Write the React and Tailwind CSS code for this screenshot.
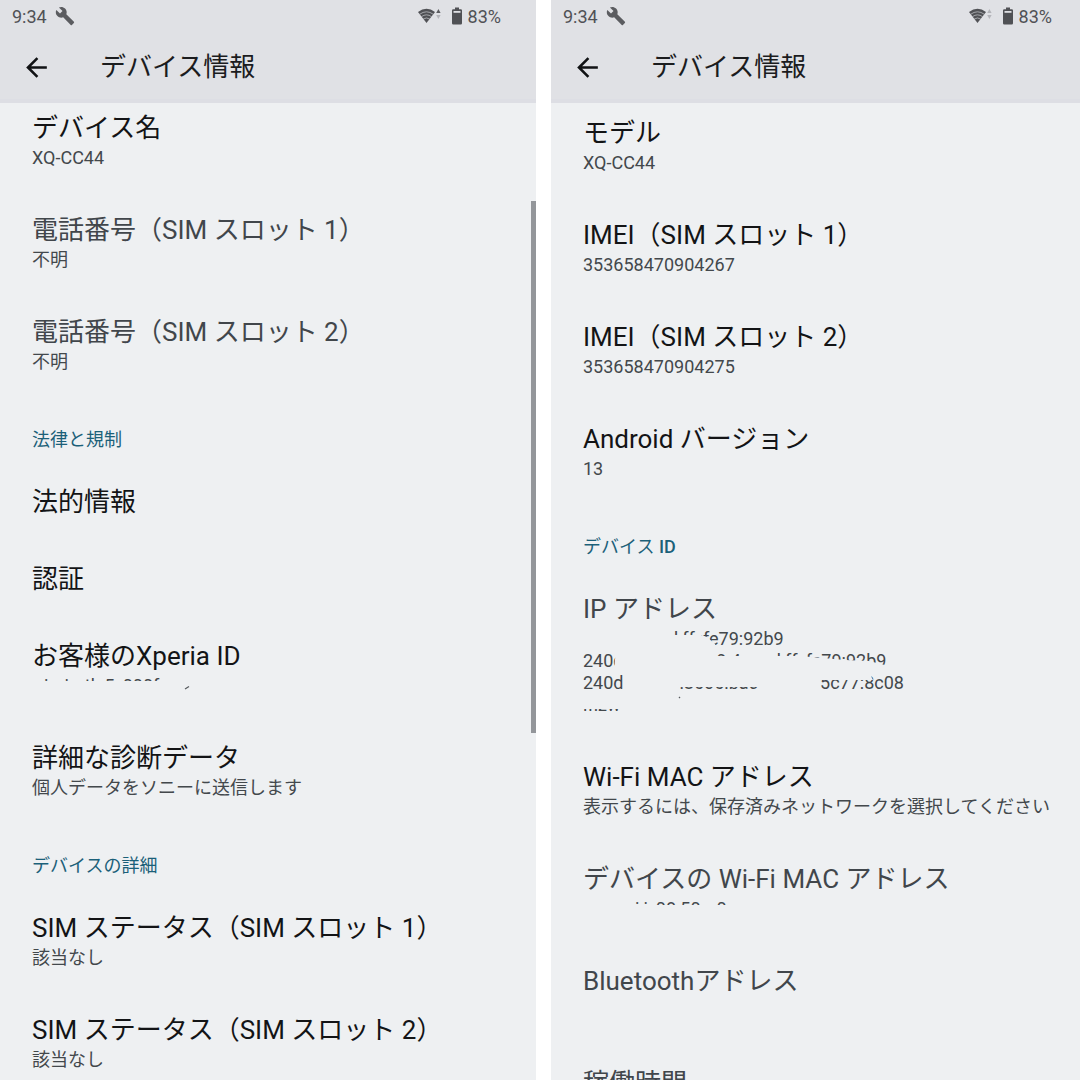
import React from 'react';
import { MdArrowBack, MdBuild } from 'react-icons/md';
import clsx from 'clsx';

const WifiIcon = ({ active }) => (
  <svg className="w-6 h-4" viewBox="0 0 24 16" fill="none" aria-hidden="true">
    <path d="M1 4Q9.500 -2.600 18 4L9.500 15Z" fill="#505155" />
    <path d="M2.600 6.300Q9.500 1.300 16.400 6.300" stroke="#c9cace" strokeWidth="0.700" />
    <path d="M4.400 8.700Q9.500 5 14.600 8.700" stroke="#c9cace" strokeWidth="0.700" />
    <path d="M6.200 11.100Q9.500 8.800 12.800 11.100" stroke="#c9cace" strokeWidth="0.700" />
    <path d="M19.200 5L21.400 1L23.600 5Z" fill={active ? '#5b5c60' : '#b4b5ba'} />
    <path d="M19.200 7L21.400 11L23.600 7Z" fill="#b4b5ba" />
  </svg>
);

const BatteryIcon = () => (
  <svg className="w-3 h-[18px]" viewBox="0 0 12 18" aria-hidden="true">
    <path d="M4 0.500H8V2.300H9.800Q11 2.300 11 3.500V16.300Q11 17.500 9.800 17.500H2.200Q1 17.500 1 16.300V3.500Q1 2.300 2.200 2.300H4Z" fill="#505155" />
    <path d="M2.500 4H9.500V5.800H2.500Z" fill="#dfe0e4" />
  </svg>
);

const Header = ({ active, edge }) => (
  <header className="relative z-10 h-[103px] bg-[#e0e1e5] border-b-4 border-[#dddee4]">
    <div className={clsx('flex h-8 items-center justify-between pl-3 text-[18px] text-[#505155]', edge)}>
      <div className="flex items-center gap-2">
        <span>9:34</span>
        <MdBuild className="size-5 text-[#5b5c60]" />
      </div>
      <div className="flex items-center">
        <WifiIcon active={active} />
        <div className="ml-[10px] flex items-center gap-[5px]">
          <BatteryIcon />
          <span>83%</span>
        </div>
      </div>
    </div>
    <div className="flex h-[70px] items-center pl-[21px]">
      <button type="button" aria-label="戻る" className="mr-12">
        <MdArrowBack className="size-[31px] text-[#111214]" />
      </button>
      <h1 className="text-[26px] leading-[35px] text-[#1b1c1e]">デバイス情報</h1>
    </div>
  </header>
);

const Item = ({ title, muted, children }) => (
  <li className="py-[21px] whitespace-nowrap">
    <h3 className={clsx('text-[26px] leading-[35px]', muted ? 'text-[#41464b]' : 'text-[#131416]')}>
      {title}
    </h3>
    {children && (
      <div className="mt-px mb-[2px] text-[18px] leading-[22px] text-[#43484c]">{children}</div>
    )}
  </li>
);

const Category = ({ children }) => (
  <h2 className="pt-[33px] pb-[13px] text-[18px] leading-[22px] text-[#1b6079]">{children}</h2>
);

// Values with the private part wiped out in the panel colour
const Wiped = ({ children, className, viewBox, paths, marks }) => (
  <div className="relative">
    {children}
    <svg className={clsx('absolute top-0 left-0', className)} viewBox={viewBox} aria-hidden="true">
      <path d={paths} fill="#eef0f2" />
      {marks && <path d={marks} stroke="#55595d" strokeWidth="1.200" fill="none" />}
    </svg>
  </div>
);

const Panel = ({ header, scrolled, children }) => (
  <section className="relative overflow-hidden bg-[#eef0f2]">
    {header}
    <div className={clsx('pl-8', scrolled)}>{children}</div>
  </section>
);

export default function App() {
  return (
    <main className="grid h-screen grid-cols-[536fr_529fr] gap-[15px] overflow-hidden bg-white font-[Roboto,'Noto_Sans_CJK_JP',sans-serif]" lang="ja">
      <Panel header={<Header active edge="pr-[35px]" />} scrolled="-mt-[13px]">
        <ul>
          <Item title="デバイス名">XQ-CC44</Item>
          <Item title="電話番号（SIM スロット 1）" muted>不明</Item>
          <Item title="電話番号（SIM スロット 2）" muted>不明</Item>
        </ul>
        <Category>法律と規制</Category>
        <ul>
          <Item title="法的情報" />
          <Item title="認証" />
          <Item title="お客様のXperia ID">
            <Wiped
              className="w-[200px] h-[22px]"
              viewBox="0 0 200 22"
              paths="M0 6H200V22H0Z"
              marks="M153 14L157 11.500"
            >
              <div className="flex">
                <span className="ml-3">i</span>
                <span className="ml-4">i</span>
                <span className="ml-4">th</span>
                <span className="ml-1">5</span>
                <span className="ml-2">000f</span>
              </div>
            </Wiped>
          </Item>
          <Item title="詳細な診断データ">個人データをソニーに送信します</Item>
        </ul>
        <Category>デバイスの詳細</Category>
        <ul>
          <Item title="SIM ステータス（SIM スロット 1）">該当なし</Item>
          <Item title="SIM ステータス（SIM スロット 2）">該当なし</Item>
        </ul>
        <div className="absolute right-0 top-[201px] h-[532px] w-[5px] bg-[#93969a]" />
      </Panel>

      <Panel header={<Header edge="pr-7" />} scrolled="-mt-2">
        <ul>
          <Item title="モデル">XQ-CC44</Item>
          <Item title="IMEI（SIM スロット 1）">353658470904267</Item>
          <Item title="IMEI（SIM スロット 2）">353658470904275</Item>
          <Item title="Android バージョン">13</Item>
        </ul>
        <Category>デバイス <span className="font-medium">ID</span></Category>
        <ul>
          <Item title="IP アドレス" muted>
            <Wiped
              className="w-[340px] h-[88px]"
              viewBox="0 0 340 88"
              paths="M80 7H118L124 9L132 16L134 22H80Z M34 22H42V44H33Q30 33 34 22Z M125 28H216L240 30L262 32L286 33L302 37L322 34L325 44H125Z M90 44H190V59H90Z M236 44H286L290 52H236Z M0 66H60V81H0Z"
              marks="M96 70L97 69"
            >
              <div className="flex gap-1 pl-[85px]">
                <span>d</span>
                <span>ff</span>
                <span>:fe79:92b9</span>
              </div>
              <div className="flex">
                <span>240d</span>
                <span className="ml-[93px]">9</span>
                <span className="ml-1">4</span>
                <div className="ml-[30px] flex gap-1">
                  <span>d</span>
                  <span>ff</span>
                  <span>:fe79:92b9</span>
                </div>
              </div>
              <div className="flex">
                <span>240d</span>
                <span className="ml-[56px]">:8606:bac</span>
                <span className="ml-[62px]">5c77:8c08</span>
              </div>
              <div>if:zw</div>
            </Wiped>
          </Item>
          <Item title="Wi-Fi MAC アドレス">
            表示するには、保存済みネットワークを選択してください
          </Item>
          <Item title="デバイスの Wi-Fi MAC アドレス" muted>
            <Wiped className="w-[200px] h-[22px]" viewBox="0 0 200 22" paths="M0 7H200V22H0Z">
              <div className="flex">
                <span className="ml-[52px]">i</span>
                <span className="ml-1">i</span>
                <span className="ml-2">08:50</span>
                <span className="ml-4">0</span>
              </div>
            </Wiped>
          </Item>
          <Item title="Bluetoothアドレス" muted>&nbsp;</Item>
          <Item title="稼働時間" muted />
        </ul>
      </Panel>
    </main>
  );
}
